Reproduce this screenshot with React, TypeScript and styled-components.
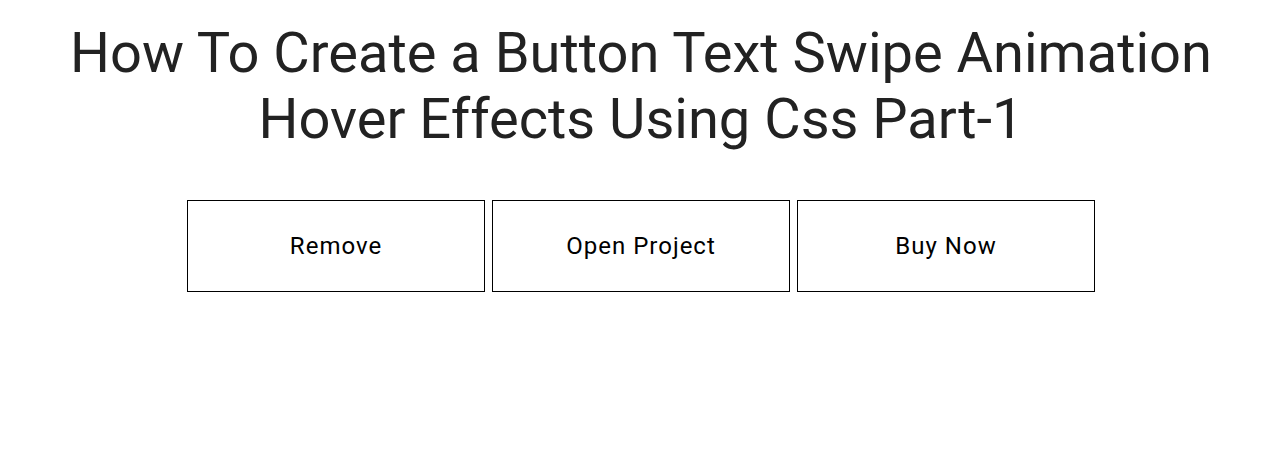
import styled, { createGlobalStyle } from "styled-components";

const GlobalStyle = createGlobalStyle`
  html, body {
    margin: 0;
    padding: 0;
    background: #fff;
  }
  body {
    font-family: Roboto, "Liberation Sans", sans-serif;
  }
`;

const Page = styled.div`
  display: flex;
  flex-direction: column;
  align-items: center;
  padding: 21px 0 0 14px;
`;

const Title = styled.h1`
  margin: 0;
  font-size: 56px;
  font-weight: 400;
  line-height: 65.5px;
  color: #222;
  text-align: center;
`;

const ButtonRow = styled.div`
  display: flex;
  gap: 7px;
  margin-top: 48px;
`;

const SwipeButton = styled.button`
  width: 298px;
  height: 92px;
  box-sizing: border-box;
  border: 1px solid #000;
  background: #fff;
  color: #000;
  font-family: Roboto, "Liberation Sans", sans-serif;
  font-size: 24px;
  letter-spacing: 1px;
  cursor: pointer;
  padding: 0;
`;

const labels = ["Remove", "Open Project", "Buy Now"];

const App = () => {
  return (
    <>
      <GlobalStyle />
      <Page>
        <Title>
          How To Create a Button Text Swipe Animation
          <br />
          Hover Effects Using Css Part-1
        </Title>
        <ButtonRow>
          {labels.map((label) => (
            <SwipeButton key={label}>{label}</SwipeButton>
          ))}
        </ButtonRow>
      </Page>
    </>
  );
};

export default App;
